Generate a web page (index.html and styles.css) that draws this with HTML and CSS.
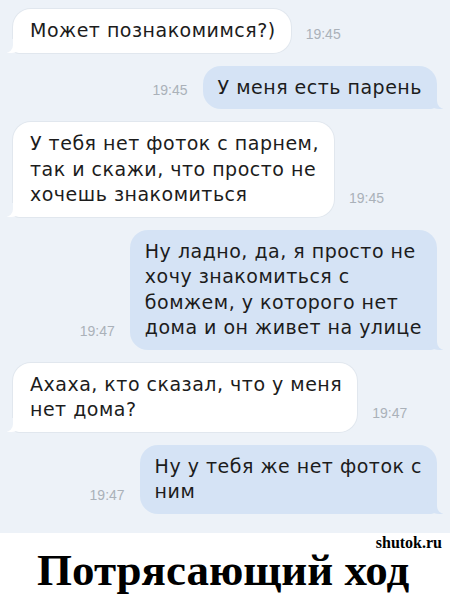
FILE: index.html
```html
<!DOCTYPE html>
<html lang="ru">
<head>
<meta charset="utf-8">
<title>Потрясающий ход</title>
<link rel="stylesheet" href="styles.css">
</head>
<body>
<div class="chat">
  <div class="row in r1">
    <div class="bubble">Может познакомимся?)</div>
    <span class="time">19:45</span>
  </div>
  <div class="row out r2">
    <span class="time">19:45</span>
    <div class="bubble">У меня есть парень</div>
  </div>
  <div class="row in r3">
    <div class="bubble">У тебя нет фоток с парнем,<br>так и скажи, что просто не<br>хочешь знакомиться</div>
    <span class="time">19:45</span>
  </div>
  <div class="row out r4">
    <span class="time">19:47</span>
    <div class="bubble">Ну ладно, да, я просто не<br>хочу знакомиться с<br>бомжем, у которого нет<br>дома и он живет на улице</div>
  </div>
  <div class="row in r5">
    <div class="bubble">Ахаха, кто сказал, что у меня<br>нет дома?</div>
    <span class="time">19:47</span>
  </div>
  <div class="row out r6">
    <span class="time">19:47</span>
    <div class="bubble">Ну у тебя же нет фоток с<br>ним</div>
  </div>
</div>
<div class="caption">
  <div class="site">shutok.ru</div>
  <div class="title">Потрясающий ход</div>
</div>
</body>
</html>
```
FILE: styles.css
```css
html, body {
  margin: 0;
  padding: 0;
  background: #ffffff;
}
body {
  width: 450px;
  height: 600px;
  overflow: hidden;
}
.chat {
  background: #edf2f8;
  height: 533px;
  box-sizing: border-box;
  padding: 9px 13px 0 13px;
  display: flex;
  flex-direction: column;
  gap: 13px;
  font-family: "DejaVu Sans", "Liberation Sans", sans-serif;
}
.row {
  display: flex;
  align-items: flex-end;
  gap: 15px;
}
.row.out {
  justify-content: flex-end;
}
.bubble {
  position: relative;
  font-size: 19px;
  letter-spacing: 0.5px;
  line-height: 25.5px;
  color: #1c1c1c;
  padding: 9px 15px 9px 17px;
  border-radius: 18px;
  white-space: nowrap;
}
.in .bubble {
  background: #ffffff;
  box-shadow: 0 0 0 1px #e1e7ee;
  border-bottom-left-radius: 6px;
}
.out .bubble {
  background: #d5e3f5;
  padding: 9px 15px 9px 15px;
  border-bottom-right-radius: 6px;
}
.in .bubble::before {
  content: "";
  position: absolute;
  left: -6px;
  bottom: 0;
  width: 16px;
  height: 14px;
  background: #ffffff;
  border-bottom-right-radius: 12px;
}
.in .bubble::after {
  content: "";
  position: absolute;
  left: -10px;
  bottom: 0;
  width: 10px;
  height: 14px;
  background: #edf2f8;
  border-bottom-right-radius: 8px;
}
.out .bubble::before {
  content: "";
  position: absolute;
  right: -6px;
  bottom: 0;
  width: 16px;
  height: 14px;
  background: #d5e3f5;
  border-bottom-left-radius: 12px;
}
.out .bubble::after {
  content: "";
  position: absolute;
  right: -10px;
  bottom: 0;
  width: 10px;
  height: 14px;
  background: #edf2f8;
  border-bottom-left-radius: 8px;
}
.time {
  font-family: "Liberation Sans", sans-serif;
  font-size: 14px;
  line-height: 14px;
  color: #aab1b9;
  margin-bottom: 12px;
}
.caption {
  font-family: "Liberation Serif", "Times New Roman", serif;
  font-weight: bold;
  color: #000;
}
.site {
  text-align: right;
  font-size: 16px;
  line-height: 16px;
  padding: 2px 8px 0 0;
}
.title {
  font-size: 45px;
  line-height: 36px;
  padding-left: 37px;
  margin-top: 1px;
}
```
